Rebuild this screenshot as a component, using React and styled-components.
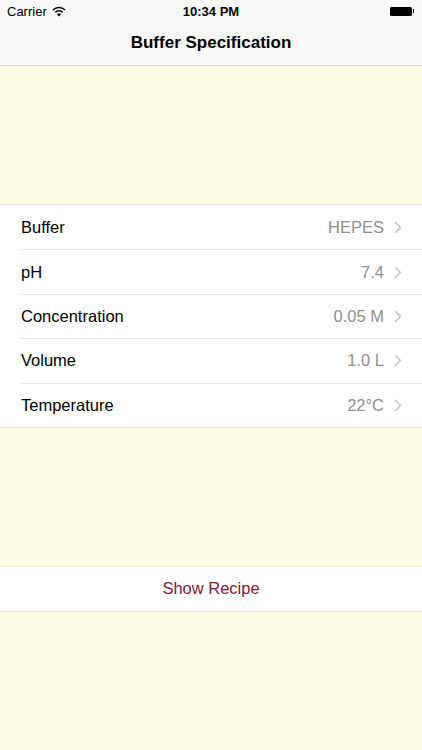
import styled, { createGlobalStyle } from 'styled-components';

const GlobalStyle = createGlobalStyle`
  html, body {
    margin: 0;
    padding: 0;
    background: #fefbe4;
    font-family: "Liberation Sans", Arial, sans-serif;
  }
`;

const Screen = styled.div`
  width: 422px;
  min-height: 750px;
  background: #fefbe4;
  display: flex;
  flex-direction: column;
`;

const Header = styled.header`
  background: #f8f8f7;
  border-bottom: 1px solid #d9d6cf;
  height: 65px;
  display: flex;
  flex-direction: column;
`;

const StatusBar = styled.div`
  height: 22px;
  display: grid;
  grid-template-columns: 1fr auto 1fr;
  align-items: center;
  padding: 0 7px;
  font-size: 13px;
  color: #000;
`;

const Carrier = styled.div`
  display: flex;
  align-items: center;
  gap: 5px;
`;

const Clock = styled.div`
  font-weight: bold;
  font-size: 13px;
`;

const Battery = styled.div`
  justify-self: end;
  display: flex;
  align-items: center;
  margin-right: 1px;

  .body {
    width: 22px;
    height: 9px;
    background: #000;
    border-radius: 1.5px;
  }
  .tip {
    width: 1.5px;
    height: 4px;
    background: #000;
    margin-left: 1px;
  }
`;

const NavTitle = styled.h1`
  flex: 1;
  margin: 0;
  display: flex;
  align-items: center;
  justify-content: center;
  font-size: 17px;
  font-weight: bold;
  color: #000;
  padding-bottom: 2px;
`;

const Spacer = styled.div`
  height: ${(p) => p.$h}px;
`;

const Group = styled.section`
  background: #fff;
  border-top: 1px solid #e8e6df;
  border-bottom: 1px solid #e8e6df;
`;

const Row = styled.div`
  height: 44.4px;
  display: flex;
  align-items: center;
  padding-left: 21px;
  font-size: 16.5px;

  & + & > .inner {
    border-top: 1px solid #e3e3e3;
  }
`;

const RowInner = styled.div`
  flex: 1;
  height: 100%;
  display: flex;
  align-items: center;
  padding-right: 20px;
  box-sizing: border-box;
`;

const Label = styled.span`
  color: #000;
  flex: 1;
`;

const Value = styled.span`
  color: #8e8e93;
  margin-right: 10px;
`;

const Chevron = () => (
  <svg width="8" height="13" viewBox="0 0 8 13">
    <path d="M1 1 L6.5 6.5 L1 12" fill="none" stroke="#c7c7cc" strokeWidth="1.6" />
  </svg>
);

const ActionButton = styled.button`
  width: 100%;
  height: 46px;
  border: none;
  border-top: 1px solid #ece9e0;
  border-bottom: 1px solid #ece9e0;
  background: #fff;
  color: #8a1538;
  font-family: "Liberation Sans", Arial, sans-serif;
  font-size: 16.5px;
  padding: 0;
`;

const rows = [
  ['Buffer', 'HEPES'],
  ['pH', '7.4'],
  ['Concentration', '0.05 M'],
  ['Volume', '1.0 L'],
  ['Temperature', '22\u00b0C'],
];

function App() {
  return (
    <Screen>
      <GlobalStyle />
      <Header>
        <StatusBar>
          <Carrier>
            Carrier
            <svg width="14" height="11" viewBox="0 0 14 11">
              <path d="M1 4 A8.5 8.5 0 0 1 13 4" fill="none" stroke="#000" strokeWidth="1.6" />
              <path d="M3.3 6.3 A5.2 5.2 0 0 1 10.7 6.3" fill="none" stroke="#000" strokeWidth="1.6" />
              <path d="M7 10.5 L4.9 8.4 A3 3 0 0 1 9.1 8.4 Z" fill="#000" />
            </svg>
          </Carrier>
          <Clock>10:34 PM</Clock>
          <Battery>
            <div className="body" />
            <div className="tip" />
          </Battery>
        </StatusBar>
        <NavTitle>Buffer Specification</NavTitle>
      </Header>
      <Spacer $h={138} />
      <Group>
        {rows.map(([label, value]) => (
          <Row key={label}>
            <RowInner className="inner">
              <Label>{label}</Label>
              <Value>{value}</Value>
              <Chevron />
            </RowInner>
          </Row>
        ))}
      </Group>
      <Spacer $h={138} />
      <ActionButton>Show Recipe</ActionButton>
    </Screen>
  );
}

export default App;
